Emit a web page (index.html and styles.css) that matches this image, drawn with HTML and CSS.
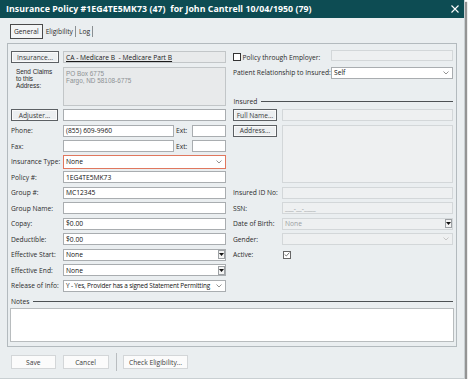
FILE: index.html
```html
<!DOCTYPE html>
<html>
<head>
<meta charset="utf-8">
<link rel="stylesheet" href="styles.css">
</head>
<body>
<div class="window">
  <div class="titlebar">
    <span class="title">Insurance Policy #1EG4TE5MK73 (47) &nbsp;for John Cantrell 10/04/1950 (79)</span>
    <svg class="close" width="8" height="8" viewBox="0 0 8 8"><path d="M0.5 0.5L7.5 7.5M7.5 0.5L0.5 7.5" stroke="#fff" stroke-width="1.1"/></svg>
  </div>
  <div class="tabs">
    <div class="tab active">General</div>
    <div class="tab">Eligibility</div>
    <div class="tab">Log</div>
  </div>
  <div class="panel">
    <div class="cols">
      <div class="grid left">
        <div class="btn dark c1 r1">Insurance...</div>
        <div class="field gray link c24 r1"><span>CA - Medicare B &nbsp;- Medicare Part B</span></div>
        <div class="label multi c1 r2"><span>Send Claims</span><span>to this</span><span>Address:</span></div>
        <div class="field gray addr c24 r2"><span>PO Box 6775</span><span>Fargo, ND 58108-6775</span></div>

        <div class="btn dark c1 r3 adj">Adjuster...</div>
        <div class="field c24 r3"></div>

        <div class="label c1 r4">Phone:</div>
        <div class="field c2 r4"><span>(855) 609-9960</span></div>
        <div class="label ext c3 r4">Ext:</div>
        <div class="field c4 r4"></div>

        <div class="label c1 r5">Fax:</div>
        <div class="field c2 r5"></div>
        <div class="label ext c3 r5">Ext:</div>
        <div class="field c4 r5"></div>

        <div class="label c1 r6">Insurance Type:</div>
        <div class="field select focus c24 r6"><span>None</span><svg class="chev" width="6" height="4" viewBox="0 0 6 4"><path d="M0.5 0.5L3 3L5.5 0.5" fill="none" stroke="#777" stroke-width="0.8"/></svg></div>

        <div class="label c1 r7">Policy #:</div>
        <div class="field c24 r7"><span>1EG4TE5MK73</span></div>

        <div class="label c1 r8">Group #:</div>
        <div class="field c24 r8"><span>MC12345</span></div>

        <div class="label c1 r9">Group Name:</div>
        <div class="field c24 r9"></div>

        <div class="label c1 r10">Copay:</div>
        <div class="field c24 r10"><span>$0.00</span></div>

        <div class="label c1 r11">Deductible:</div>
        <div class="field c24 r11"><span>$0.00</span></div>

        <div class="label c1 r12">Effective Start:</div>
        <div class="field dtp c24 r12"><span>None</span><span class="dtp-btn"><svg width="5" height="3" viewBox="0 0 5 3"><path d="M0 0H5L2.5 3Z" fill="#111"/></svg></span></div>

        <div class="label c1 r13">Effective End:</div>
        <div class="field dtp c24 r13"><span>None</span><span class="dtp-btn"><svg width="5" height="3" viewBox="0 0 5 3"><path d="M0 0H5L2.5 3Z" fill="#111"/></svg></span></div>

        <div class="label c1 r14">Release of Info:</div>
        <div class="field select c24 r14"><span class="tight">Y - Yes, Provider has a signed Statement Permitting</span><svg class="chev" width="6" height="4" viewBox="0 0 6 4"><path d="M0.5 0.5L3 3L5.5 0.5" fill="none" stroke="#777" stroke-width="0.8"/></svg></div>
      </div>

      <div class="grid right">
        <div class="check-row rc12 r1"><span class="checkbox"></span><span>Policy through Employer:</span></div>
        <div class="field disabled rc3 r1 emp"></div>

        <div class="label top rc12 r2">Patient Relationship to Insured:</div>
        <div class="field select top rc3 r2 rel"><span>Self</span><svg class="chev" width="6" height="4" viewBox="0 0 6 4"><path d="M0.5 0.5L3 3L5.5 0.5" fill="none" stroke="#777" stroke-width="0.8"/></svg></div>
        <div class="group-head insured rc13 r2"><span>Insured</span><span class="line"></span></div>

        <div class="btn dark rc1 r3">Full Name...</div>
        <div class="field disabled rc23 r3"></div>

        <div class="btn dark rc1 r4">Address...</div>
        <div class="field disabled rc23 r4to7"></div>

        <div class="label rc1 r8">Insured ID No:</div>
        <div class="field disabled rc23 r8"></div>

        <div class="label rc1 r9">SSN:</div>
        <div class="field disabled rc23 r9"><span class="muted">___-__-____</span></div>

        <div class="label rc1 r10">Date of Birth:</div>
        <div class="field disabled dtp rc23 r10"><span class="muted">None</span><span class="dtp-btn"><svg width="5" height="3" viewBox="0 0 5 3"><path d="M0 0H5L2.5 3Z" fill="#111"/></svg></span></div>

        <div class="label rc1 r11">Gender:</div>
        <div class="field disabled select rc23 r11"><span></span><svg class="chev" width="6" height="4" viewBox="0 0 6 4"><path d="M0.5 0.5L3 3L5.5 0.5" fill="none" stroke="#bbb" stroke-width="0.8"/></svg></div>

        <div class="label rc1 r12">Active:</div>
        <div class="check-cell rc23 r12"><span class="checkbox checked"><svg width="6" height="5" viewBox="0 0 6 5"><path d="M0.6 2.4L2.3 4L5.4 0.6" fill="none" stroke="#555" stroke-width="0.8"/></svg></span></div>
      </div>
    </div>

    <div class="group-head notes"><span>Notes</span><span class="line"></span></div>
    <div class="textarea"></div>
  </div>

  <div class="buttons">
    <div class="btn light save">Save</div>
    <div class="btn light cancel">Cancel</div>
    <div class="sep"></div>
    <div class="btn light check">Check Eligibility...</div>
  </div>
</div>
</body>
</html>
```

FILE: styles.css
```css
* { box-sizing: border-box; }

body {
  margin: 0;
  background: #ffffff;
  font-family: "Open Sans", "Liberation Sans", sans-serif;
  font-size: 6.7px;
  color: #2a2a2a;
}

.window {
  width: 465px;
  height: 379px;
  background: #eaeef0;
  border-right: 1px solid #c9cfd2;
  border-bottom: 1px solid #c9cfd2;
  box-shadow: 2px 2px 1px rgba(60, 60, 60, 0.55);
  display: flex;
  flex-direction: column;
}

.titlebar {
  height: 18px;
  flex: none;
  background: #0d4c53;
  color: #ffffff;
  display: flex;
  align-items: center;
  justify-content: space-between;
  padding: 0 5px 0 6px;
}

.title {
  font-weight: 700;
  font-size: 8.75px;
  white-space: nowrap;
  letter-spacing: 0.05px;
}

.tabs {
  display: flex;
  height: 15px;
  margin: 6px 0 4px 10px;
  align-items: stretch;
}

.tab {
  display: flex;
  align-items: center;
  padding: 0 2px;
  border-right: 1px solid #8a8f92;
  margin: 2px 0 2px 1px;
}

.tab.active {
  border: 1px solid #4a4a4a;
  margin: 0;
  padding: 0 3px;
  background: #f3f5f6;
}

.panel {
  margin-left: 7px;
  width: 450px;
  height: 304px;
  flex: none;
  border: 1px solid #b3babe;
  padding: 7px 3px 0 3px;
}

.cols {
  display: flex;
  gap: 7px;
}

.grid {
  display: grid;
  grid-template-rows: 12px 39px repeat(12, 12px);
  row-gap: 3.5px;
}

.grid.left {
  width: 215px;
  grid-template-columns: 52px 111px 18px 34px;
}

.grid.right {
  width: 220px;
  grid-template-columns: 49px 49px 122px;
}

.c1 { grid-column: 1; }
.c2 { grid-column: 2; }
.c3 { grid-column: 3; }
.c4 { grid-column: 4; }
.c24 { grid-column: 2 / 5; }
.rc1 { grid-column: 1; }
.rc12 { grid-column: 1 / 3; }
.rc13 { grid-column: 1 / 4; }
.rc23 { grid-column: 2 / 4; }
.rc3 { grid-column: 3; }

.r1 { grid-row: 1; }
.r2 { grid-row: 2; }
.r3 { grid-row: 3; }
.r4 { grid-row: 4; }
.r5 { grid-row: 5; }
.r6 { grid-row: 6; }
.r7 { grid-row: 7; }
.r8 { grid-row: 8; }
.r9 { grid-row: 9; }
.r10 { grid-row: 10; }
.r11 { grid-row: 11; }
.r12 { grid-row: 12; }
.r13 { grid-row: 13; }
.r14 { grid-row: 14; }
.r4to7 { grid-row: 4 / 8; }

.label {
  display: flex;
  align-items: center;
  white-space: nowrap;
  color: #2b2b2b;
}

.label.multi {
  flex-direction: column;
  align-items: flex-start;
  padding: 0 0 0 5px;
  margin-top: 1px;
}

.label.multi span,
.field.addr span {
  display: block;
  font-family: "Liberation Sans", sans-serif;
  font-size: 6.4px;
  line-height: 7.2px;
  height: 7.2px;
}

.label.ext { padding-left: 2px; }

.label.top {
  align-self: start;
  height: 11px;
  margin-top: 0.5px;
}

.field {
  background: #ffffff;
  border: 1px solid #a9adb0;
  display: flex;
  align-items: center;
  padding: 0 2px;
  color: #111;
  white-space: nowrap;
  overflow: hidden;
  min-width: 0;
}

.field.gray {
  background: #e8eaeb;
  border-color: #c2c6c8;
}

.field.link span { text-decoration: underline; color: #1b1b1b; }

.field.addr {
  flex-direction: column;
  align-items: flex-start;
  padding-top: 2px;
  color: #8d9194;
}

.field.disabled {
  background: #eef0f1;
  border-color: #d3d7d9;
}

.muted { color: #9a9ea1; }

.tight {
  letter-spacing: -0.15px;
  font-size: 6.4px;
}

.field.select, .field.dtp {
  justify-content: space-between;
}

.field.select { padding-right: 3px; }

.chev { flex: none; margin-left: 1px; }

.field.focus {
  border-color: #e0775e;
  margin: -1px 0 0 0;
  height: 14px;
}

.field.dtp { padding-right: 0; }

.dtp-btn {
  width: 7px;
  height: 9px;
  margin-right: 0.5px;
  border: 1px solid #9da1a4;
  background: #f4f4f4;
  display: flex;
  align-items: center;
  justify-content: center;
  flex: none;
}

.field.emp {
  margin-top: -1px;
  height: 11px;
}

.field.rel {
  align-self: start;
  height: 11.5px;
  margin-top: 0.5px;
}

.btn {
  display: flex;
  align-items: center;
  justify-content: center;
  white-space: nowrap;
}

.btn.dark {
  border: 1px solid #5c6064;
  background: #eceff1;
  color: #3a3a3a;
  width: 48px;
  box-shadow: inset 0 0 0 1px #fafafa;
}

.btn.adj { width: 47px; }
.grid.right .btn.dark { width: 44px; }

.check-row {
  display: flex;
  align-items: center;
  gap: 1.5px;
  white-space: nowrap;
}

.checkbox {
  width: 8px;
  height: 8px;
  border: 1px solid #333;
  background: #fff;
  flex: none;
  display: flex;
  align-items: center;
  justify-content: center;
}

.checkbox.checked { border-color: #666; }

.check-cell {
  display: flex;
  align-items: center;
  padding-left: 1px;
}

.group-head {
  display: flex;
  align-items: center;
  gap: 4px;
  height: 8px;
  white-space: nowrap;
}

.group-head .line {
  flex: 1;
  height: 1px;
  background: #4d5154;
}

.group-head.insured {
  align-self: end;
  padding-left: 0.5px;
}

.group-head.notes {
  margin-top: 5.5px;
  width: 442px;
}

.textarea {
  margin-top: 3px;
  margin-left: -1px;
  width: 444px;
  height: 34px;
  background: #ffffff;
  border: 1px solid #b8bcbe;
}

.buttons {
  display: flex;
  align-items: center;
  margin: 8px 0 0 10.5px;
  height: 14px;
}

.btn.light {
  height: 13.5px;
  background: #fbfbfb;
  border: 1px solid #d3d6d8;
  color: #3a3a3a;
}

.btn.save { width: 45.5px; }
.btn.cancel { width: 46px; margin-left: 6.5px; }
.sep {
  width: 1px;
  height: 18px;
  background: #b9bdc0;
  margin: 0 6.5px 0 7px;
}
.btn.check { width: 65px; }
```
